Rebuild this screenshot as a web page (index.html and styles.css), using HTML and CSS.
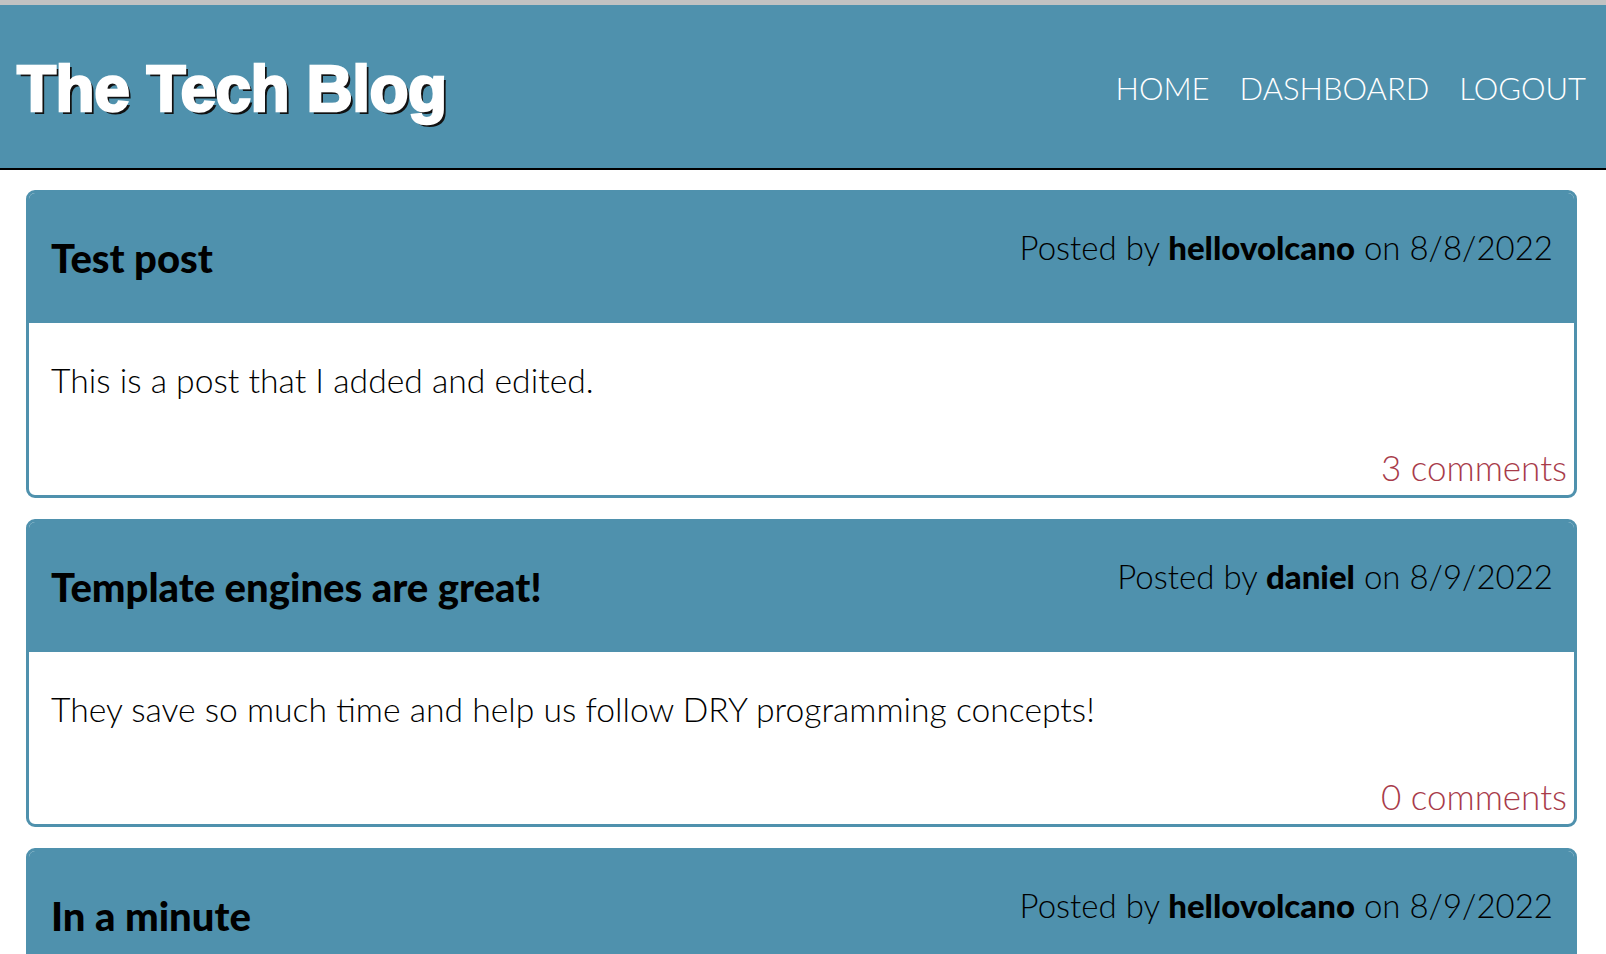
FILE: index.html
```html
<!DOCTYPE html>
<html lang="en">
<head>
<meta charset="utf-8">
<title>The Tech Blog</title>
<link rel="stylesheet" href="styles.css">
</head>
<body>
<div class="chrome-strip"></div>
<header class="site-header">
  <h1 class="site-title">The Tech Blog</h1>
  <nav class="site-nav">
    <a href="#">HOME</a>
    <a href="#">DASHBOARD</a>
    <a href="#">LOGOUT</a>
  </nav>
</header>
<main class="posts">
  <article class="post">
    <div class="post-head">
      <h2 class="post-title">Test post</h2>
      <p class="post-meta">Posted by <strong>hellovolcano</strong> on 8/8/2022</p>
    </div>
    <div class="post-body">
      <p class="post-text">This is a post that I added and edited.</p>
      <a class="post-comments" href="#">3 comments</a>
    </div>
  </article>
  <article class="post">
    <div class="post-head">
      <h2 class="post-title">Template engines are great!</h2>
      <p class="post-meta">Posted by <strong>daniel</strong> on 8/9/2022</p>
    </div>
    <div class="post-body">
      <p class="post-text">They save so much time and help us follow DRY programming concepts!</p>
      <a class="post-comments" href="#">0 comments</a>
    </div>
  </article>
  <article class="post">
    <div class="post-head">
      <h2 class="post-title">In a minute</h2>
      <p class="post-meta">Posted by <strong>hellovolcano</strong> on 8/9/2022</p>
    </div>
  </article>
</main>
</body>
</html>
```
FILE: styles.css
```css
html, body {
  margin: 0;
  padding: 0;
  background: #ffffff;
  font-family: "Lato", "Inter", sans-serif;
  font-weight: 300;
  color: #000;
}

.chrome-strip {
  height: 5px;
  background: #c2c2c2;
}

.site-header {
  height: 163px;
  background: #4f91ad;
  border-bottom: 2px solid #000;
  display: flex;
  align-items: center;
  justify-content: space-between;
  padding: 0 20px 0 17px;
}

.site-title {
  margin: 0;
  padding-top: 4px;
  font-family: "Liberation Sans", Arial, sans-serif;
  font-weight: 700;
  font-size: 64px;
  letter-spacing: -0.5px;
  color: #fff;
  -webkit-text-stroke: 2.5px #fff;
  text-shadow: 3px 3px 0 #111;
}

.site-nav {
  display: flex;
  gap: 30px;
  padding-top: 3px;
}

.site-nav a {
  color: #fff;
  text-decoration: none;
  font-size: 31px;
  font-weight: 300;
}

.posts {
  padding: 20px 29px 0 26px;
}

.post {
  border: 3px solid #4f91ad;
  border-radius: 9px;
  margin-bottom: 21px;
  overflow: hidden;
}

.post-head {
  background: #4f91ad;
  height: 130px;
  display: flex;
  justify-content: space-between;
  align-items: flex-start;
  padding: 0 21px 0 22px;
}

.post-title {
  margin: 41px 0 0;
  font-size: 40px;
  font-weight: 900;
}

.post-meta {
  margin: 34px 0 0;
  font-size: 33px;
  font-weight: 300;
}

.post-meta strong {
  font-weight: 900;
}

.post-body {
  height: 172px;
  display: flex;
  flex-direction: column;
  justify-content: space-between;
  padding: 0 7px 0 22px;
}

.post-text {
  margin: 37px 0 0;
  font-size: 33.7px;
  font-weight: 300;
}

.post-comments {
  align-self: flex-end;
  color: #a83b4a;
  text-decoration: none;
  font-size: 35px;
  font-weight: 300;
  margin-bottom: 7px;
}
```
